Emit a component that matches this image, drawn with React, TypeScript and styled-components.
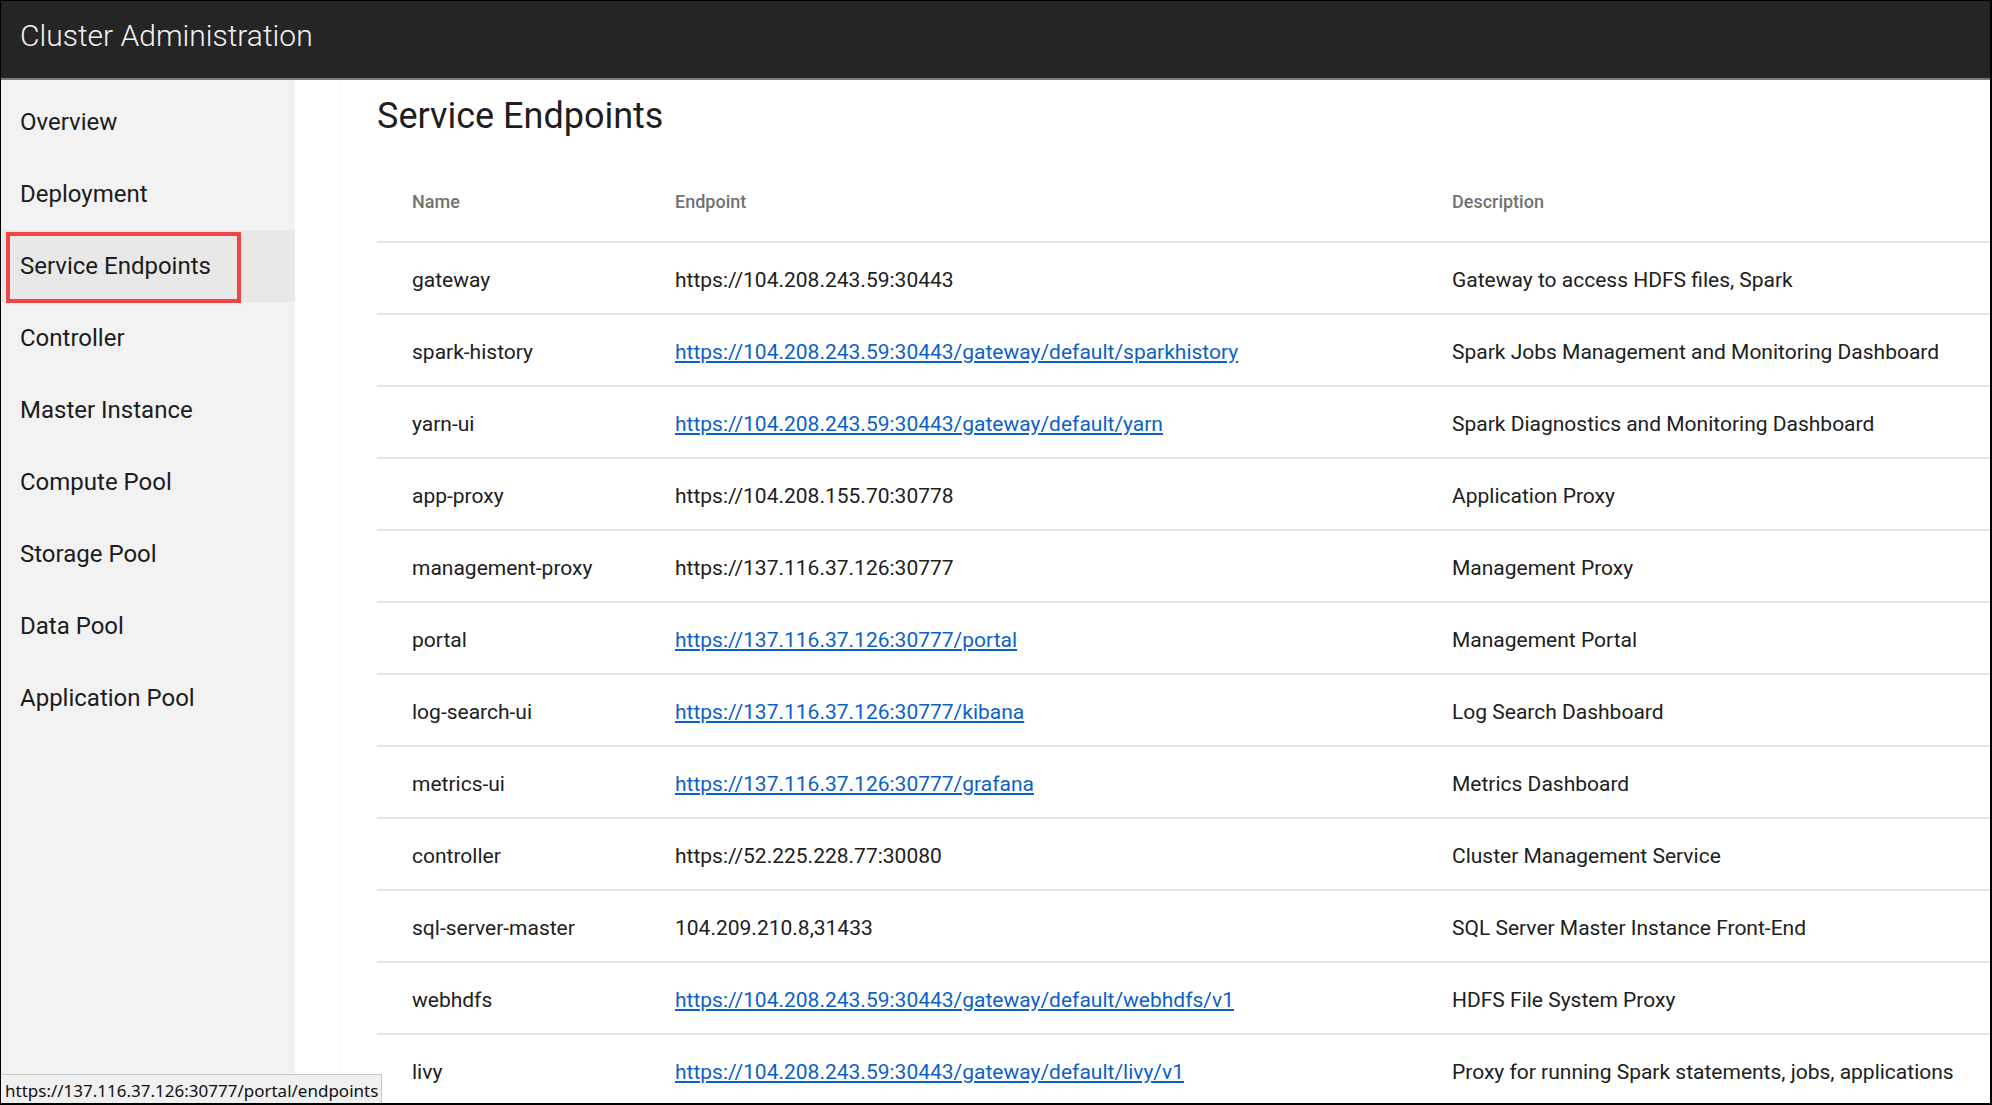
import React from "react";
import styled, { createGlobalStyle } from "styled-components";

const Global = createGlobalStyle`
  html, body { margin: 0; padding: 0; background: #ffffff; }
  * { box-sizing: border-box; }
  body { font-family: Roboto, "Liberation Sans", Arial, sans-serif; }
`;

const Frame = styled.div`
  position: relative;
  width: 1992px;
  height: 1105px;
  overflow: hidden;
  border-style: solid;
  border-color: #000;
  border-width: 1px 2px 2px 1px;
  display: flex;
  flex-direction: column;
  background: #fff;
`;

const TopBar = styled.header`
  flex: 0 0 79px;
  background: #252525;
  border-bottom: 2px solid #7a7a7a;
  padding: 20px 0 0 19px;
`;

const TopTitle = styled.h1`
  margin: 0;
  font-family: Roboto, "Liberation Sans", sans-serif;
  font-weight: 300;
  font-size: 30px;
  line-height: 30px;
  color: #f2f2f2;
`;

const Body = styled.div`
  flex: 1;
  display: flex;
  min-height: 0;
`;

const Sidebar = styled.nav`
  flex: 0 0 294px;
  background: #f2f2f2;
  padding-top: 6px;
  display: flex;
  flex-direction: column;
`;

const NavItem = styled.div<{ $active?: boolean }>`
  position: relative;
  height: 72px;
  line-height: 72px;
  padding-left: 19px;
  font-size: 24px;
  font-weight: 400;
  color: #1c1c1c;
  background: ${(p) => (p.$active ? "#e8e8e8" : "transparent")};
`;

const Highlight = styled.span`
  position: absolute;
  left: 5px;
  top: 2px;
  width: 235px;
  height: 71px;
  border: 4px solid #f24545;
  pointer-events: none;
`;

const Main = styled.main`
  flex: 1;
  margin-left: 45px;
  border-left: 1px solid #f4f4f4;
  padding: 18px 0 0 36px;
  min-width: 0;
`;

const PageTitle = styled.h2`
  margin: 0;
  font-family: Roboto, "Liberation Sans", sans-serif;
  font-weight: 400;
  font-size: 36px;
  line-height: 36px;
  color: #1e1e1e;
`;

const Table = styled.div`
  margin-top: 26px;
`;

const Row = styled.div<{ $head?: boolean }>`
  display: grid;
  grid-template-columns: 263px 777px 1fr;
  align-items: center;
  height: ${(p) => (p.$head ? "83px" : "72px")};
  border-bottom: 2px solid #e4e4e4;
  padding-top: ${(p) => (p.$head ? "2px" : "3px")};
`;

const HeadCell = styled.div`
  padding-left: 35px;
  font-size: 18px;
  font-weight: 500;
  color: #727272;
  white-space: nowrap;
`;

const Cell = styled.div`
  padding-left: 35px;
  font-size: 21px;
  font-weight: 400;
  color: #202020;
  white-space: nowrap;
`;

const Link = styled.a`
  color: #0b61c7;
  text-decoration: underline;
  text-underline-offset: 2px;
`;

const StatusBar = styled.div`
  position: absolute;
  left: 0;
  bottom: 0;
  width: 381px;
  height: 29px;
  background: #f0f0f0;
  border-top: 1px solid #c6c6c6;
  border-right: 1px solid #c6c6c6;
  padding: 4px 0 0 4px;
  font-family: "Noto Sans", "Open Sans", sans-serif;
  font-size: 17px;
  line-height: 24px;
  color: #111;
  white-space: nowrap;
`;

type Endpoint = { name: string; url: string; link: boolean; desc: string };

const endpoints: Endpoint[] = [
  { name: "gateway", url: "https://104.208.243.59:30443", link: false, desc: "Gateway to access HDFS files, Spark" },
  { name: "spark-history", url: "https://104.208.243.59:30443/gateway/default/sparkhistory", link: true, desc: "Spark Jobs Management and Monitoring Dashboard" },
  { name: "yarn-ui", url: "https://104.208.243.59:30443/gateway/default/yarn", link: true, desc: "Spark Diagnostics and Monitoring Dashboard" },
  { name: "app-proxy", url: "https://104.208.155.70:30778", link: false, desc: "Application Proxy" },
  { name: "management-proxy", url: "https://137.116.37.126:30777", link: false, desc: "Management Proxy" },
  { name: "portal", url: "https://137.116.37.126:30777/portal", link: true, desc: "Management Portal" },
  { name: "log-search-ui", url: "https://137.116.37.126:30777/kibana", link: true, desc: "Log Search Dashboard" },
  { name: "metrics-ui", url: "https://137.116.37.126:30777/grafana", link: true, desc: "Metrics Dashboard" },
  { name: "controller", url: "https://52.225.228.77:30080", link: false, desc: "Cluster Management Service" },
  { name: "sql-server-master", url: "104.209.210.8,31433", link: false, desc: "SQL Server Master Instance Front-End" },
  { name: "webhdfs", url: "https://104.208.243.59:30443/gateway/default/webhdfs/v1", link: true, desc: "HDFS File System Proxy" },
  { name: "livy", url: "https://104.208.243.59:30443/gateway/default/livy/v1", link: true, desc: "Proxy for running Spark statements, jobs, applications" },
];

const navItems = [
  "Overview",
  "Deployment",
  "Service Endpoints",
  "Controller",
  "Master Instance",
  "Compute Pool",
  "Storage Pool",
  "Data Pool",
  "Application Pool",
];

export default function App() {
  return (
    <>
      <Global />
      <Frame>
        <TopBar>
          <TopTitle>Cluster Administration</TopTitle>
        </TopBar>
        <Body>
          <Sidebar>
            {navItems.map((n) => (
              <NavItem key={n} $active={n === "Service Endpoints"}>
                {n}
                {n === "Service Endpoints" && <Highlight />}
              </NavItem>
            ))}
          </Sidebar>
          <Main>
            <PageTitle>Service Endpoints</PageTitle>
            <Table>
              <Row $head>
                <HeadCell>Name</HeadCell>
                <HeadCell>Endpoint</HeadCell>
                <HeadCell>Description</HeadCell>
              </Row>
              {endpoints.map((e) => (
                <Row key={e.name}>
                  <Cell>{e.name}</Cell>
                  <Cell>{e.link ? <Link href="#">{e.url}</Link> : e.url}</Cell>
                  <Cell>{e.desc}</Cell>
                </Row>
              ))}
            </Table>
          </Main>
        </Body>
        <StatusBar>https://137.116.37.126:30777/portal/endpoints</StatusBar>
      </Frame>
    </>
  );
}
